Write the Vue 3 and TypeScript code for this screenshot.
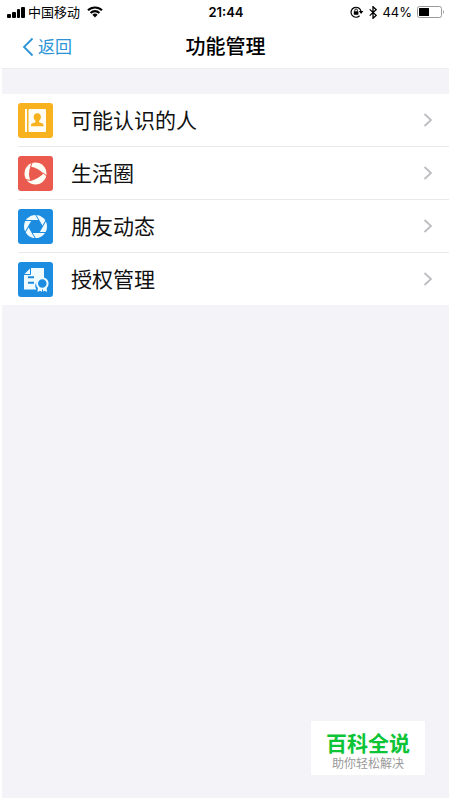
<script setup lang="ts">
type IconName = 'contacts' | 'life' | 'moments' | 'license'

interface Feature {
  icon: IconName
  label: string
}

const features: Feature[] = [
  { icon: 'contacts', label: '可能认识的人' },
  { icon: 'life', label: '生活圈' },
  { icon: 'moments', label: '朋友动态' },
  { icon: 'license', label: '授权管理' },
]

const bladeAngles: number[] = [0, 60, 120, 180, 240, 300]
</script>

<template>
  <div class="screen">
    <div class="status">
      <div class="status-left">
        <svg class="signal" width="18" height="12" viewBox="0 0 18 12" aria-hidden="true">
          <rect x="0" y="8" width="4" height="4" rx="1" />
          <rect x="5" y="6" width="4" height="6" rx="1" />
          <rect x="10" y="3" width="3" height="9" rx="1" />
          <rect x="14" y="1" width="4" height="11" rx="1" />
        </svg>
        <span class="carrier">中国移动</span>
        <svg class="wifi" width="16" height="12" viewBox="0 0 16 12" aria-hidden="true">
          <path d="M1 4.300a10 10 0 0 1 14 0M3.600 7a6.200 6.200 0 0 1 8.800 0" fill="none" stroke="#000" stroke-width="2.100" />
          <path d="M5.400 8.800a3.700 3.700 0 0 1 5.200 0L8 11.600z" />
        </svg>
      </div>
      <time class="clock">21:44</time>
      <div class="status-right">
        <svg width="14" height="12" viewBox="0 0 14 12" aria-hidden="true">
          <path d="M9.600 9.800A5 5 0 1 1 11 5.400" fill="none" stroke="#000" stroke-width="1.200" />
          <path d="M8.800 5h4.600l-2.300 3z" />
          <rect x="3.800" y="5.300" width="4.600" height="3.400" rx="0.400" />
          <path d="M4.800 5.500V4.200a1.300 1.300 0 0 1 2.600 0v1.300" fill="none" stroke="#000" stroke-width="0.900" />
        </svg>
        <svg width="8" height="13" viewBox="0 0 8 13" aria-hidden="true">
          <path d="M.7 3.400l6.400 6L4 12.300V.7l3.100 2.900-6.400 6" fill="none" stroke="#000" stroke-width="1.300" />
        </svg>
        <span class="percent">44%</span>
        <svg width="28" height="12" viewBox="0 0 28 12" aria-hidden="true">
          <rect x="0.500" y="0.500" width="24" height="11" rx="2" fill="#fff" stroke="#9a9a9a" />
          <rect x="2" y="2" width="10" height="8" rx="0.500" />
          <path d="M26 4q2 2 0 4z" fill="#9a9a9a" />
        </svg>
      </div>
    </div>

    <header class="nav">
      <button class="back" type="button">
        <svg width="12" height="20" viewBox="0 0 12 20" aria-hidden="true">
          <path d="M10.500 1.500L2 10l8.500 8.500" fill="none" stroke="currentColor" stroke-width="1.800" />
        </svg>
        <span>返回</span>
      </button>
      <h1 class="title">功能管理</h1>
    </header>

    <main class="content">
      <ul class="list">
        <li v-for="item in features" :key="item.icon" class="item">
          <a class="row" href="#">
            <svg class="icon" :class="item.icon" width="35" height="35" viewBox="0 0 35 35" aria-hidden="true">
              <template v-if="item.icon === 'contacts'">
                <rect x="7" y="6" width="2" height="23" />
                <rect x="10.500" y="6" width="17.500" height="23" rx="1" />
                <path
                  class="cut"
                  d="M19.300 10.300c2.300 0 3.600 1.600 3.600 3.800 0 1.700-.8 3-1.800 3.800v1.300l3.500 1.400c.7.4 1 1 1 2.600H13c0-1.600.3-2.200 1-2.600l3.500-1.400v-1.300c-1-.8-1.800-2.100-1.800-3.800 0-2.200 1.300-3.800 3.600-3.800z"
                />
              </template>
              <template v-else-if="item.icon === 'life'">
                <circle cx="17.500" cy="17.500" r="11" />
                <path class="cut" d="M12.500 10.500Q20 12 25.500 17.500Q20 23 12.500 25Q9.500 17.500 12.500 10.500z" />
                <path class="gap" d="M14.500 5.500L12.500 11M25 17L29.500 20.500M13 24.500L7 23.500" />
              </template>
              <template v-else-if="item.icon === 'moments'">
                <circle cx="17.500" cy="17.500" r="11.500" />
                <path class="cut" d="M24.500 17.500L21 23.560H14L10.500 17.500L14 11.440H21z" />
                <path
                  v-for="angle in bladeAngles"
                  :key="angle"
                  class="blade-gap"
                  d="M24.500 17.500L17 4.510"
                  :transform="`rotate(${angle} 17.5 17.5)`"
                />
              </template>
              <template v-else>
                <path d="M12.500 6H26v11a7 7 0 0 0-7.600 10.500H6V12.500z" />
                <path class="fold" d="M6 12.500h6.500V6" />
                <path class="lines" d="M10 15.300h6M10 20.800h6" />
                <path d="M20 25l-.5 5 2.500-1.300 2.300 1.300 2.300-1.300 2.500 1.300-.6-5z" />
                <circle class="medal" cx="24.300" cy="21.500" r="5.300" />
                <path class="ribbon-gap" d="M24.500 27.500v2.500" />
              </template>
            </svg>
            <span class="label">{{ item.label }}</span>
            <svg class="chevron" width="10" height="14" viewBox="0 0 10 14" aria-hidden="true">
              <path d="M1.500 1l6.500 6-6.500 6" fill="none" stroke="#bdbdc1" stroke-width="1.800" />
            </svg>
          </a>
        </li>
      </ul>
    </main>

    <aside class="badge">
      <strong class="badge-name">百科全说</strong>
      <span class="badge-text">助你轻松解决</span>
    </aside>
  </div>
</template>

<style>
body {
  background: #fff;
}
</style>

<style scoped>
.screen {
  box-sizing: border-box;
  position: relative;
  display: flex;
  flex-direction: column;
  min-height: 100vh;
  padding: 0 1px 2px 2px;
  color: #000;
  font-family: Inter, 'Noto Sans CJK SC', sans-serif;
}

.status {
  display: grid;
  grid-template-columns: 1fr auto 1fr;
  align-items: center;
  height: 24px;
  padding: 0 4px 0 5px;
  font-size: 13px;
  line-height: 20px;
}

.status-left,
.status-right {
  display: flex;
  align-items: center;
}

.carrier {
  margin: 0 7px 0 3px;
}

.clock {
  font-weight: 600;
}

.status-right {
  justify-content: flex-end;
  gap: 5px;
}

.nav {
  display: grid;
  grid-template-columns: 1fr auto 1fr;
  align-items: center;
  height: 45px;
  padding-top: 1px;
  border-bottom: 1px solid #ececef;
  box-sizing: border-box;
}

.back {
  display: flex;
  align-items: center;
  justify-self: start;
  gap: 4px;
  margin-left: 20px;
  padding: 0;
  border: 0;
  background: none;
  color: #2b94d6;
  font: inherit;
  font-size: 17px;
  line-height: 24px;
}

.title {
  margin: 0;
  font-size: 20px;
  font-weight: 500;
  line-height: 28px;
}

.content {
  flex: 1;
  padding-top: 25px;
  background: #f3f3f8;
}

.list {
  margin: 0;
  padding: 0;
  list-style: none;
  background: #fff;
}

.item {
  padding-left: 16px;
}

.row {
  display: flex;
  align-items: center;
  height: 52px;
  padding-right: 16px;
  color: #111;
  text-decoration: none;
}

.item + .item .row {
  border-top: 1px solid #e9e9ed;
}

.icon {
  border-radius: 3px;
  fill: #fffdf4;
}

.contacts {
  background: #f7b21d;
}

.contacts .cut {
  fill: #f7b21d;
}

.life {
  background: #eb5a4e;
}

.life .cut {
  fill: #eb5a4e;
}

.life .gap {
  fill: none;
  stroke: #eb5a4e;
  stroke-width: 1px;
}

.moments,
.license {
  background: #1c8ce0;
  fill: #f0fbff;
}

.moments .cut {
  fill: #1c8ce0;
}

.blade-gap {
  fill: none;
  stroke: #1c8ce0;
  stroke-width: 1px;
}

.fold,
.lines,
.ribbon-gap {
  fill: none;
  stroke: #1c8ce0;
  stroke-width: 1px;
}

.lines {
  stroke-width: 2px;
}

.medal {
  fill: #1c8ce0;
  stroke: #f0fbff;
  stroke-width: 2px;
}

.label {
  flex: 1;
  margin-left: 18px;
  padding-top: 2px;
  font-size: 21px;
  line-height: 30px;
}

.badge {
  position: absolute;
  right: 25px;
  bottom: 25px;
  display: flex;
  flex-direction: column;
  align-items: center;
  padding: 10px 15px 3px;
  background: #fff;
}

.badge-name {
  color: #0cc435;
  font-size: 21px;
  font-weight: 700;
  line-height: 25px;
}

.badge-text {
  color: #999;
  font-size: 12px;
  line-height: 16px;
}
</style>
